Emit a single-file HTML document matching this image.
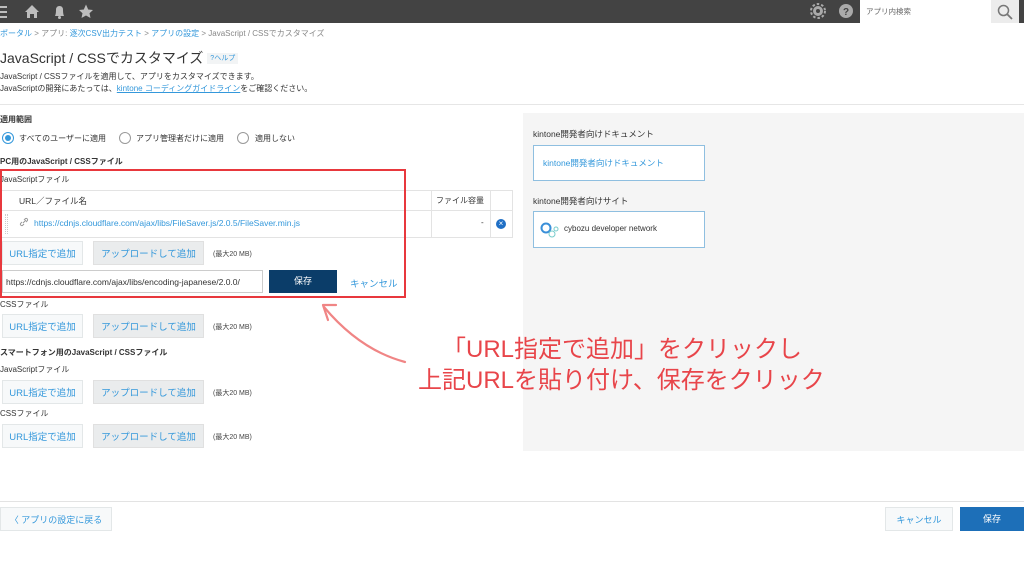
<!DOCTYPE html>
<html><head><meta charset="utf-8"><style>
*{margin:0;padding:0;box-sizing:border-box}
body{width:1024px;height:572px;overflow:hidden;background:#fff;position:relative;font-family:"Liberation Sans","Noto Sans CJK JP",sans-serif;color:#333;font-size:8.5px}
.a{position:absolute;white-space:nowrap}
.b{font-weight:bold}
.lnk{color:#3498db}
.btn{position:absolute;height:24px;border:1px solid #e3e7e8;background:#f7f9fa;color:#3498db;font-size:9.5px;display:flex;align-items:center;justify-content:center}
.btn.g{background:#eaeced;color:#3498db;border-color:#e0e0e0}
.note{position:absolute;font-size:7px;color:#444}
.radio{position:absolute;width:12px;height:12px;border:1px solid #999;border-radius:50%;background:#fff}
</style></head><body>
<!-- top bar -->
<div class="a" style="left:0;top:0;width:1024px;height:23px;background:#434343"></div>
<svg class="a" style="left:0px;top:0px" width="100" height="23">
<g fill="#bdbdbd"><rect x="0" y="6" width="7" height="2"/><rect x="0" y="11" width="7" height="2"/><rect x="0" y="16" width="7" height="2"/>
<path d="M25 12 L32 5 L39 12 L37 12 L37 18 L34 18 L34 14 L30 14 L30 18 L27 18 L27 12Z"/>
<path d="M55 16 Q56 14 56 10 Q56 6 59.5 6 Q63 6 63 10 Q63 14 64 16Z"/><circle cx="59.5" cy="17.5" r="1.5"/>
<path d="M86 4.5 L88.2 9.5 L93 10 L89.5 13.3 L90.5 18 L86 15.5 L81.5 18 L82.5 13.3 L79 10 L83.8 9.5Z"/></g></svg>
<svg class="a" style="left:808px;top:2px" width="50" height="20"><g fill="#aaa"><circle cx="10" cy="9" r="5"/><circle cx="10" cy="9" r="7" fill="none" stroke="#aaa" stroke-width="2" stroke-dasharray="2.5 2"/><circle cx="10" cy="9" r="2" fill="#434343"/><circle cx="38" cy="9" r="7"/></g><text x="38" y="13" font-size="10" font-weight="bold" fill="#434343" text-anchor="middle" font-family="Liberation Sans">?</text></svg>
<div class="a" style="left:860px;top:0px;width:131px;height:23px;background:#fff;font-size:7.5px;color:#666;padding:6px 0 0 6px">アプリ内検索</div>
<div class="a" style="left:991px;top:0px;width:28px;height:23px;background:#ececec"></div>
<svg class="a" style="left:996px;top:3px" width="18" height="18"><circle cx="7.5" cy="7.5" r="5" fill="none" stroke="#777" stroke-width="1.5"/><line x1="11" y1="11" x2="16" y2="16" stroke="#777" stroke-width="1.8"/></svg>

<div class="a" style="left:0;top:28px;font-size:8px;color:#888"><span class="lnk">ポータル</span> &gt; アプリ: <span class="lnk">逐次CSV出力テスト</span> &gt; <span class="lnk">アプリの設定</span> &gt; JavaScript / CSSでカスタマイズ</div>
<div class="a" style="left:0;top:48px;font-size:14px;color:#333">JavaScript / CSSでカスタマイズ <span style="font-size:7px;color:#3498db;background:#f2f4f5;padding:2px 3px;vertical-align:3px">?ヘルプ</span></div>
<div class="a" style="left:0;top:71px;font-size:8px;line-height:12px">JavaScript / CSSファイルを適用して、アプリをカスタマイズできます。<br>JavaScriptの開発にあたっては、<span class="lnk" style="text-decoration:underline">kintone コーディングガイドライン</span>をご確認ください。</div>
<div class="a" style="left:0;top:104px;width:1024px;height:1px;background:#e6e6e6"></div>

<div class="a" style="left:523px;top:113px;width:501px;height:338px;background:#f5f5f5"></div>
<div class="a" style="left:533px;top:128px;font-size:8.5px">kintone開発者向けドキュメント</div>
<div class="a" style="left:533px;top:145px;width:172px;height:36px;border:1px solid #8fbfe0;background:#fff;font-size:8.5px;color:#3498db;padding:11px 0 0 9px">kintone開発者向けドキュメント</div>
<div class="a" style="left:533px;top:195px;font-size:8.5px">kintone開発者向けサイト</div>
<div class="a" style="left:533px;top:211px;width:172px;height:37px;border:1px solid #8fbfe0;background:#fff;font-size:8px;color:#333;padding:12px 0 0 30px">cybozu developer network</div>
<svg class="a" style="left:540px;top:220px" width="20" height="20"><circle cx="6" cy="8" r="4.5" fill="none" stroke="#3a8fd8" stroke-width="2"/><circle cx="12" cy="14" r="3" fill="none" stroke="#7cc" stroke-width="1"/><circle cx="16" cy="9" r="2" fill="none" stroke="#7cc" stroke-width="1"/></svg>

<div class="a b" style="left:0;top:114px;font-size:8px">適用範囲</div>
<div class="radio" style="left:2px;top:132px;border-color:#3498db"><div style="margin:2px;width:6px;height:6px;border-radius:50%;background:#3498db"></div></div>
<div class="a" style="left:19px;top:133px;font-size:8px">すべてのユーザーに適用</div>
<div class="radio" style="left:119px;top:132px"></div>
<div class="a" style="left:136px;top:133px;font-size:8px">アプリ管理者だけに適用</div>
<div class="radio" style="left:237px;top:132px"></div>
<div class="a" style="left:255px;top:133px;font-size:8px">適用しない</div>

<div class="a b" style="left:0;top:156px;font-size:8px">PC用のJavaScript / CSSファイル</div>
<div class="a" style="left:0;top:174px;font-size:8px">JavaScriptファイル</div>
<div class="a" style="left:0;top:190px;width:513px;height:48px;border:1px solid #e3e3e3"></div>
<div class="a" style="left:0;top:210px;width:513px;height:1px;background:#e3e3e3"></div>
<div class="a" style="left:431px;top:190px;width:1px;height:48px;background:#e3e3e3"></div>
<div class="a" style="left:490px;top:190px;width:1px;height:48px;background:#e3e3e3"></div>
<div class="a" style="left:19px;top:195px;font-size:8.5px">URL／ファイル名</div>
<div class="a" style="left:436px;top:195px;font-size:8px">ファイル容量</div>
<div class="a" style="left:5px;top:214px;width:3px;height:20px;border-left:1px dotted #ccc;border-right:1px dotted #ccc"></div>
<svg class="a" style="left:19px;top:217px" width="10" height="10"><path d="M4 6 L7 3 M3 5 L1.5 6.5 a1.5 1.5 0 0 0 2 2 L5 7 M5 3 L6.5 1.5 a1.5 1.5 0 0 1 2 2 L7 5" fill="none" stroke="#999" stroke-width="1"/></svg>
<div class="a lnk" style="left:34px;top:218px;font-size:8.5px">https://cdnjs.cloudflare.com/ajax/libs/FileSaver.js/2.0.5/FileSaver.min.js</div>
<div class="a" style="left:481px;top:218px;font-size:8px">-</div>
<div class="a" style="left:496px;top:219px;width:10px;height:10px;border-radius:50%;background:#1f6fc5;color:#fff;font-size:8px;line-height:10px;text-align:center">×</div>

<div class="btn" style="left:2px;top:241px;width:81px">URL指定で追加</div>
<div class="btn g" style="left:93px;top:241px;width:111px">アップロードして追加</div>
<div class="note" style="left:213px;top:249px">(最大20 MB)</div>
<div class="a" style="left:2px;top:270px;width:261px;height:23px;border:1px solid #ccc;font-size:8.5px;padding:6px 0 0 3px;overflow:hidden">https://cdnjs.cloudflare.com/ajax/libs/encoding-japanese/2.0.0/</div>
<div class="a" style="left:269px;top:270px;width:68px;height:23px;background:#0b3d69;color:#fff;font-size:9px;text-align:center;line-height:23px">保存</div>
<div class="a lnk" style="left:350px;top:276px;font-size:9.5px">キャンセル</div>
<div class="a" style="left:0;top:169px;width:406px;height:129px;border:2px solid #e8383d"></div>

<div class="a" style="left:0;top:299px;font-size:8px">CSSファイル</div>
<div class="btn" style="left:2px;top:314px;width:81px">URL指定で追加</div>
<div class="btn g" style="left:93px;top:314px;width:111px">アップロードして追加</div>
<div class="note" style="left:213px;top:322px">(最大20 MB)</div>
<div class="a b" style="left:0;top:347px;font-size:8px">スマートフォン用のJavaScript / CSSファイル</div>
<div class="a" style="left:0;top:364px;font-size:8px">JavaScriptファイル</div>
<div class="btn" style="left:2px;top:380px;width:81px">URL指定で追加</div>
<div class="btn g" style="left:93px;top:380px;width:111px">アップロードして追加</div>
<div class="note" style="left:213px;top:388px">(最大20 MB)</div>
<div class="a" style="left:0;top:408px;font-size:8px">CSSファイル</div>
<div class="btn" style="left:2px;top:424px;width:81px">URL指定で追加</div>
<div class="btn g" style="left:93px;top:424px;width:111px">アップロードして追加</div>
<div class="note" style="left:213px;top:432px">(最大20 MB)</div>

<svg class="a" style="left:310px;top:295px" width="110" height="80"><path d="M95 67 Q50 55 14 12" fill="none" stroke="#f08585" stroke-width="2.2" stroke-linecap="round"/><path d="M26 10 L13 10 L18 25" fill="none" stroke="#f08585" stroke-width="2.2" stroke-linecap="round" stroke-linejoin="round"/></svg>
<div class="a" style="left:442px;top:334px;font-size:24px;color:#e8454a;line-height:31px">「URL指定で追加」をクリックし</div>
<div class="a" style="left:418px;top:365px;font-size:24px;color:#e8454a;line-height:31px">上記URLを貼り付け、保存をクリック</div>

<div class="a" style="left:0;top:501px;width:1024px;height:1px;background:#e3e3e3"></div>
<div class="btn" style="left:0;top:507px;width:112px;font-size:9px;color:#3498db">〈 アプリの設定に戻る</div>
<div class="btn" style="left:885px;top:507px;width:68px;font-size:9px;color:#3498db">キャンセル</div>
<div class="a" style="left:960px;top:507px;width:64px;height:24px;background:#1d6fb8;color:#fff;font-size:9px;text-align:center;line-height:24px">保存</div>
</body></html>
